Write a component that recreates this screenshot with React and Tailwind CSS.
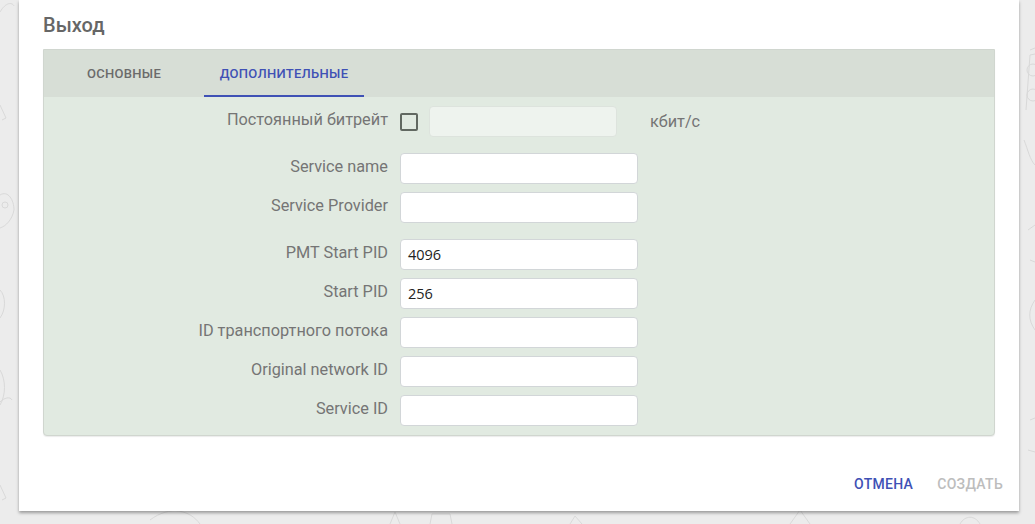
import React from "react";

function Row({ label, value, mt }) {
  return (
    <div className={`flex items-start ${mt}`}>
      <div className="w-[344px] text-right text-[16.3px] leading-[24px] pt-[2px] text-[#757575]">{label}</div>
      <div className="ml-[12px] w-[238px] h-[31px] bg-white border border-[#d2d6d8] rounded-[4px] flex items-center pl-[7px] text-[14.5px] text-[#222]" style={{ fontFamily: '"Open Sans", sans-serif' }}>
        {value}
      </div>
    </div>
  );
}

function Doodles() {
  return (
    <svg className="absolute inset-0" width="1035" height="524" fill="none" stroke="#d9d9d9" strokeWidth="1">
      <path d="M0 12 C6 2 12 2 14 6" />
      <path d="M0 105 L6 118 L2 120" />
      <path d="M0 195 C8 190 14 200 14 210 C12 220 6 226 0 228" />
      <circle cx="5" cy="205" r="3" />
      <path d="M0 290 C6 296 6 310 0 318" />
      <path d="M0 370 C6 380 6 395 0 405 M0 402 C4 398 10 396 12 400" />
      <path d="M0 485 L6 498 L2 500" />
      <path d="M1030 50 L1035 48 M1026 110 L1030 55 L1035 54" />
      <circle cx="1033" cy="70" r="6" />
      <circle cx="1033" cy="95" r="6" />
      <path d="M1024 140 C1028 150 1030 160 1035 165" />
      <path d="M1028 230 L1035 225 M1030 260 L1035 262" />
      <path d="M1035 300 C1028 310 1028 320 1035 330" />
      <path d="M1030 420 L1035 418 M1028 450 L1035 452" />
      <path d="M150 520 C170 505 190 510 200 524" />
      <path d="M390 524 L395 512 L400 524" />
      <path d="M430 524 L432 514 L450 514 L452 524" />
      <path d="M570 524 L575 516 L582 524" />
      <path d="M790 524 L800 510 L810 524" />
      <path d="M960 524 C965 515 975 515 980 524" />
    </svg>
  );
}

export default function App() {
  return (
    <div className="relative w-[1035px] h-[524px] bg-[#ececec] overflow-hidden" style={{ fontFamily: "Roboto, sans-serif" }}>
      <Doodles />
      <div className="relative ml-[19px] w-[1000px] h-[511px] bg-white shadow-[0_2px_3px_rgba(0,0,0,0.35)] flex flex-col px-6">
        <div className="pt-[11px] h-[49px] text-[20px] leading-[28px] font-medium text-[#666]">Выход</div>
        <div className="border border-[#d0d6cf] rounded-b-[4px] bg-[#e1eae1] shadow-[0_1px_1px_rgba(0,0,0,0.08)]">
          <div className="flex h-[47px] bg-[#d7ded6]">
            <div className="w-[160px] h-full flex items-center justify-center text-[13px] font-medium text-[#6b6b6b] tracking-[0.3px]">ОСНОВНЫЕ</div>
            <div className="relative w-[160px] h-full flex items-center justify-center text-[13px] font-medium text-[#3f51b5] tracking-[0.3px]">
              ДОПОЛНИТЕЛЬНЫЕ
              <div className="absolute left-0 right-0 bottom-0 h-[2px] bg-[#3f51b5]"></div>
            </div>
          </div>
          <div className="pt-[9px] pb-[9px]">
            <div className="flex items-start">
              <div className="w-[344px] text-right text-[16.3px] leading-[24px] pt-[2px] text-[#757575]">Постоянный битрейт</div>
              <div className="ml-[12px] mt-[7px] w-[18px] h-[18px] border-2 border-[#616861] rounded-[2px]"></div>
              <div className="ml-[11px] w-[188px] h-[31px] bg-[#eef3ee] border border-[#dde3dd] rounded-[4px]"></div>
              <div className="ml-[33px] text-[16.3px] leading-[24px] pt-[4px] text-[#757575]">кбит/с</div>
            </div>
            <Row label="Service name" value="" mt="mt-[16px]" />
            <Row label="Service Provider" value="" mt="mt-[8px]" />
            <Row label="PMT Start PID" value="4096" mt="mt-[16px]" />
            <Row label="Start PID" value="256" mt="mt-[8px]" />
            <Row label="ID транспортного потока" value="" mt="mt-[8px]" />
            <Row label="Original network ID" value="" mt="mt-[8px]" />
            <Row label="Service ID" value="" mt="mt-[8px]" />
          </div>
        </div>
        <div className="mt-auto mb-[9px] -mr-4 flex justify-end gap-2">
          <button className="h-[36px] px-2 text-[14px] font-medium tracking-[0.3px] text-[#3f51b5]">ОТМЕНА</button>
          <button className="h-[36px] px-2 text-[14px] font-medium tracking-[0.3px] text-[#bdbdbd]">СОЗДАТЬ</button>
        </div>
      </div>
    </div>
  );
}
